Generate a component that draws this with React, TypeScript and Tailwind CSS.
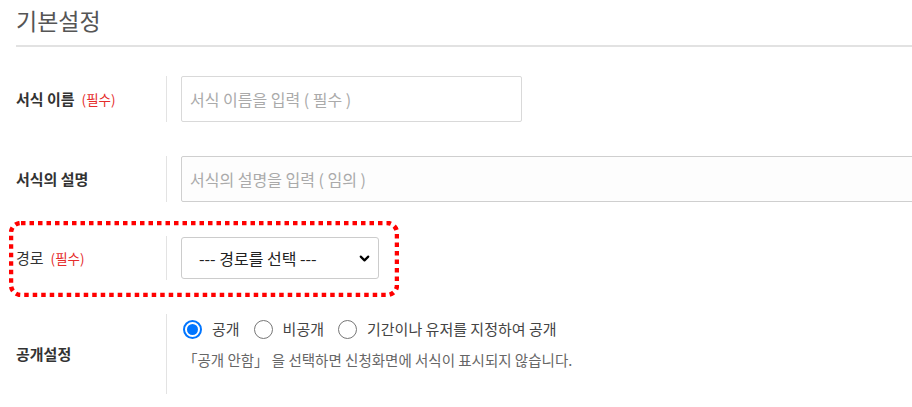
import { ChevronDown } from 'lucide-react'

const FONT = { fontFamily: '"Noto Sans CJK KR", "Noto Sans", sans-serif' }

function Radio({ checked, label }: { checked?: boolean; label: string }) {
  return (
    <label className="flex items-center gap-[10px]">
      {checked ? (
        <span className="flex h-[19px] w-[19px] items-center justify-center rounded-full border-2 border-[#0075ff] bg-white">
          <span className="h-[11px] w-[11px] rounded-full bg-[#0075ff]" />
        </span>
      ) : (
        <span className="h-[19px] w-[19px] rounded-full border-[1.5px] border-[#767676] bg-white" />
      )}
      <span className="text-[15px] text-[#444]">{label}</span>
    </label>
  )
}

function Required() {
  return <span className="ml-[7px] text-[13.5px] font-normal text-[#e52b2b]">(필수)</span>
}

export default function App() {
  return (
    <div className="w-[912px] h-[407px] overflow-hidden bg-white pl-[16px]" style={FONT}>
      {/* Title */}
      <div className="h-[47px] border-b-2 border-[#e2e2e2] pt-[5px]">
        <h2 className="text-[23px] font-normal leading-[30px] text-[#555]">기본설정</h2>
      </div>

      <div className="mt-[29px] flex flex-col gap-[34px]">
        {/* 서식 이름 */}
        <div className="flex items-center">
          <div className="w-[150px] shrink-0 text-[15px] font-bold text-[#333]">
            서식 이름
            <Required />
          </div>
          <div className="border-l border-[#e3e3e3] pl-[14px]">
            <div className="flex h-[46px] w-[341px] items-center rounded-[2px] border border-[#d9d9d9] bg-white px-[8px] text-[16px] text-[#aaa]">
              서식 이름을 입력 ( 필수 )
            </div>
          </div>
        </div>

        {/* 서식의 설명 */}
        <div className="flex items-center">
          <div className="w-[150px] shrink-0 text-[15px] font-bold text-[#333]">서식의 설명</div>
          <div className="flex-1 border-l border-[#e3e3e3] pl-[14px]">
            <div className="flex h-[46px] w-[760px] items-center rounded-[2px] border border-[#cfcfcf] bg-[#fdfdfd] px-[8px] text-[16px] text-[#aaa]">
              서식의 설명을 입력 ( 임의 )
            </div>
          </div>
        </div>

        {/* 경로 */}
        <div className="relative flex items-center">
          <div className="w-[150px] shrink-0 text-[15px] text-[#333]">
            경로
            <Required />
          </div>
          <div className="border-l border-[#e3e3e3] py-[1px] pl-[14px]">
            <div className="flex h-[42px] w-[198px] items-center justify-between rounded-[3px] border border-[#cccccc] bg-white pl-[17px] pr-[6px] text-[16px] text-[#222]">
              <span>--- 경로를 선택 ---</span>
              <ChevronDown size={15} strokeWidth={3.5} className="text-black" />
            </div>
          </div>
          <svg className="pointer-events-none absolute left-[-7px] top-[-15px]" width="390" height="76">
            <rect x="2" y="2" width="386" height="72" rx="10" fill="none" stroke="#ff0000" strokeWidth="4.5" strokeDasharray="4.5 4" />
          </svg>
        </div>

        {/* 공개설정 */}
        <div className="flex items-center">
          <div className="w-[150px] shrink-0 text-[15px] font-bold text-[#333]">공개설정</div>
          <div className="h-[80px] border-l border-[#e3e3e3] pl-[16px] pt-[4px]">
            <div className="flex items-center gap-[14px]">
              <Radio checked label="공개" />
              <Radio label="비공개" />
              <Radio label="기간이나 유저를 지정하여 공개" />
            </div>
            <p className="mt-[8px] text-[14.5px] text-[#666]">
              「공개 안함」 을 선택하면 신청화면에 서식이 표시되지 않습니다.
            </p>
          </div>
        </div>
      </div>
    </div>
  )
}
